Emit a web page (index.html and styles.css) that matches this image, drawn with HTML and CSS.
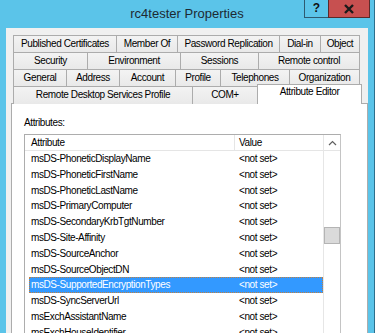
FILE: index.html
```html
<!DOCTYPE html>
<html lang="en">
<head>
    <meta charset="UTF-8">
    <title>rc4tester Properties</title>
    <link rel="stylesheet" href="styles.css">
</head>
<body>
    <div class="window">
        <div class="titlebar">
            <span class="title">rc4tester Properties</span>
            <div class="caption-buttons">
                <div class="btn-help">?</div>
                <div class="btn-close">
                    <svg width="12" height="10" viewBox="0 0 12 10"><path d="M2 1 L10 9 M10 1 L2 9" stroke="#1a1a1a" stroke-width="2.4"/></svg>
                </div>
            </div>
        </div>

        <div class="frame">
            <div class="tabs">
                <div class="tab-row row1">
                    <div class="tab">Published Certificates</div>
                    <div class="tab">Member Of</div>
                    <div class="tab">Password Replication</div>
                    <div class="tab">Dial-in</div>
                    <div class="tab">Object</div>
                </div>
                <div class="tab-row row2">
                    <div class="tab">Security</div>
                    <div class="tab">Environment</div>
                    <div class="tab">Sessions</div>
                    <div class="tab">Remote control</div>
                </div>
                <div class="tab-row row3">
                    <div class="tab">General</div>
                    <div class="tab">Address</div>
                    <div class="tab">Account</div>
                    <div class="tab">Profile</div>
                    <div class="tab">Telephones</div>
                    <div class="tab">Organization</div>
                </div>
                <div class="tab-row row4">
                    <div class="tab">Remote Desktop Services Profile</div>
                    <div class="tab">COM+</div>
                    <div class="tab selected">Attribute Editor</div>
                </div>
            </div>

            <div class="panel">
                <div class="label">Attributes:</div>
                <div class="listbox">
                    <div class="list-main">
                        <div class="list-header">
                            <div class="col-attr">Attribute</div>
                            <div class="col-value">Value</div>
                        </div>
                        <div class="list-row"><div class="cell-attr">msDS-PhoneticDisplayName</div><div class="cell-value">&lt;not set&gt;</div></div>
                        <div class="list-row"><div class="cell-attr">msDS-PhoneticFirstName</div><div class="cell-value">&lt;not set&gt;</div></div>
                        <div class="list-row"><div class="cell-attr">msDS-PhoneticLastName</div><div class="cell-value">&lt;not set&gt;</div></div>
                        <div class="list-row"><div class="cell-attr">msDS-PrimaryComputer</div><div class="cell-value">&lt;not set&gt;</div></div>
                        <div class="list-row"><div class="cell-attr">msDS-SecondaryKrbTgtNumber</div><div class="cell-value">&lt;not set&gt;</div></div>
                        <div class="list-row"><div class="cell-attr">msDS-Site-Affinity</div><div class="cell-value">&lt;not set&gt;</div></div>
                        <div class="list-row"><div class="cell-attr">msDS-SourceAnchor</div><div class="cell-value">&lt;not set&gt;</div></div>
                        <div class="list-row"><div class="cell-attr">msDS-SourceObjectDN</div><div class="cell-value">&lt;not set&gt;</div></div>
                        <div class="list-row active"><div class="cell-attr">msDS-SupportedEncryptionTypes</div><div class="cell-value">&lt;not set&gt;</div></div>
                        <div class="list-row"><div class="cell-attr">msDS-SyncServerUrl</div><div class="cell-value">&lt;not set&gt;</div></div>
                        <div class="list-row"><div class="cell-attr">msExchAssistantName</div><div class="cell-value">&lt;not set&gt;</div></div>
                        <div class="list-row"><div class="cell-attr">msExchHouseIdentifier</div><div class="cell-value">&lt;not set&gt;</div></div>
                    </div>
                    <div class="scrollbar">
                        <div class="scroll-up">
                            <svg width="9" height="6" viewBox="0 0 9 6"><path d="M1 5 L4.5 1.5 L8 5" fill="none" stroke="#606060" stroke-width="1.2"/></svg>
                        </div>
                        <div class="scroll-thumb"></div>
                    </div>
                </div>
            </div>
        </div>
    </div>
</body>
</html>
```

FILE: styles.css
```css
body {
    margin: 0;
    background-color: #5bc4e9;
    font-family: "Liberation Sans", Arial, sans-serif;
    overflow: hidden;
}
.window {
    width: 375px;
    height: 333px;
    overflow: hidden;
    border-right: 1px solid #2d6f8c;
    box-sizing: border-box;
}
.titlebar {
    height: 28px;
    position: relative;
    text-align: center;
}
.title {
    display: inline-block;
    font-size: 13px;
    line-height: 28px;
    color: #1d2a33;
}
.caption-buttons {
    position: absolute;
    top: 0;
    left: 304px;
    display: flex;
}
.btn-help {
    width: 23px;
    height: 17px;
    border: 1px solid #2e5a70;
    border-top: none;
    border-right: none;
    font-size: 12px;
    font-weight: bold;
    text-align: center;
    line-height: 17px;
    color: #111;
}
.btn-close {
    width: 40px;
    height: 17px;
    background-color: #c75050;
    border: 1px solid #5a2a2a;
    border-top: none;
    display: flex;
    align-items: center;
    justify-content: center;
}
.frame {
    margin-left: 6px;
    width: 362px;
    height: 305px;
    background-color: #f0f0f0;
    padding: 7px 0 0 5px;
    box-sizing: border-box;
}
.tabs {
    margin-left: 2px;
    font-size: 10px;
    letter-spacing: -0.4px;
}
.tab-row {
    display: grid;
    height: 17px;
}
.row1 { grid-template-columns: 103px 61px 102px 41px 40px; }
.row2 { grid-template-columns: 74px 93px 78px 102px; }
.row3 { grid-template-columns: 53px 53px 56px 45px 69px 71px; }
.row4 { grid-template-columns: 179px 65px 105px; }
.tab {
    border: 1px solid #acacac;
    border-right: none;
    border-bottom: none;
    background: linear-gradient(#f3f3f3, #e9e9e9);
    text-align: center;
    line-height: 16px;
    white-space: nowrap;
    overflow: hidden;
    color: #000;
}
.tab:last-child {
    border-right: 1px solid #acacac;
}
.tab.selected {
    background: #fff;
    margin-top: -2px;
    height: 19px;
    line-height: 13px;
    position: relative;
    z-index: 2;
}
.panel {
    height: 230px;
    background-color: #fff;
    border: 1px solid #acacac;
    padding: 0 0 0 12px;
    font-size: 10px;
    letter-spacing: -0.4px;
}
.label {
    padding-top: 13px;
    line-height: 12px;
    height: 17px;
    color: #000;
}
.listbox {
    width: 315px;
    height: 200px;
    border: 1px solid #adadad;
    border-right-color: #c4c4c4;
    display: flex;
}
.list-main {
    width: 298px;
}
.list-header {
    display: flex;
    height: 15px;
    border-bottom: 1px solid #e5e5e5;
    line-height: 15px;
}
.col-attr {
    width: 203px;
    padding-left: 6px;
    border-right: 1px solid #e5e5e5;
}
.col-value {
    padding-left: 4px;
}
.list-row {
    display: flex;
    height: 15.8px;
    line-height: 15.8px;
    margin-left: 4px;
    box-sizing: border-box;
    white-space: nowrap;
}
.cell-attr {
    width: 208px;
    padding-left: 2px;
}
.list-row.active {
    background-color: #3399ff;
    color: #fff;
    outline: 1px dotted #c08040;
    outline-offset: -1px;
}
.scrollbar {
    width: 16px;
    border-left: 1px solid #e6e6e6;
    position: relative;
}
.scroll-up {
    height: 15px;
    border-bottom: 1px solid #e5e5e5;
    display: flex;
    align-items: center;
    justify-content: center;
}
.scroll-thumb {
    position: absolute;
    left: 0;
    top: 92px;
    width: 14px;
    height: 15px;
    background-color: #dadada;
    border: 1px solid #b4b4b4;
}
```
